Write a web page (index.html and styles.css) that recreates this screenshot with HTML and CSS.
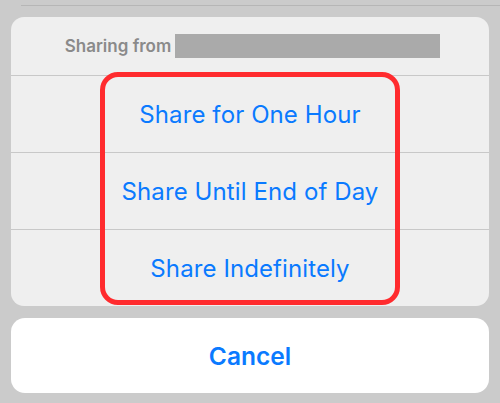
FILE: index.html
```html
<!DOCTYPE html>
<html lang="en">
<head>
  <meta charset="UTF-8" />
  <meta name="viewport" content="width=device-width, initial-scale=1.0"/>
  <title>Share Location</title>
  <link rel="stylesheet" href="styles.css">
</head>
<body>
  <div class="top-line"></div>

  <div class="sheet">
    <div class="sheet-header">
      <span class="header-label">Sharing from</span>
      <span class="redacted"></span>
    </div>
    <div class="option">Share for One Hour</div>
    <div class="option">Share Until End of Day</div>
    <div class="option">Share Indefinitely</div>
    <div class="highlight"></div>
  </div>

  <div class="cancel">Cancel</div>
</body>
</html>
```

FILE: styles.css
```css
body {
  margin: 0;
  width: 500px;
  height: 403px;
  overflow: hidden;
  background-color: #cbcbcb;
  font-family: Inter, "Open Sans", sans-serif;
}

.top-line {
  margin: 5px 0 0 21px;
  height: 1px;
  background-color: #b6b6b6;
}

.sheet {
  position: relative;
  margin: 11px 11px 0 11px;
  background-color: #efefef;
  border-radius: 13px;
}

.sheet-header {
  height: 58px;
  display: flex;
  align-items: center;
  justify-content: center;
  gap: 4px;
  padding-left: 5px;
}
.header-label {
  font-size: 17px;
  font-weight: 600;
  color: #8a8a8a;
}
.redacted {
  width: 265px;
  height: 24px;
  background-color: #aaaaaa;
}

.option {
  height: 76px;
  border-top: 1px solid #c8c8c8;
  display: flex;
  align-items: center;
  justify-content: center;
  font-size: 24px;
  letter-spacing: 0.1px;
  color: #0a7aff;
}

.highlight {
  position: absolute;
  left: 89px;
  top: 55px;
  width: 290px;
  height: 223px;
  border: 5px solid #ff2b2e;
  border-radius: 18px;
}

.cancel {
  margin: 12px 11px 0 11px;
  height: 75px;
  background-color: #fff;
  border-radius: 14px;
  display: flex;
  align-items: center;
  justify-content: center;
  font-size: 24.5px;
  font-weight: 600;
  color: #0a7aff;
}
```
